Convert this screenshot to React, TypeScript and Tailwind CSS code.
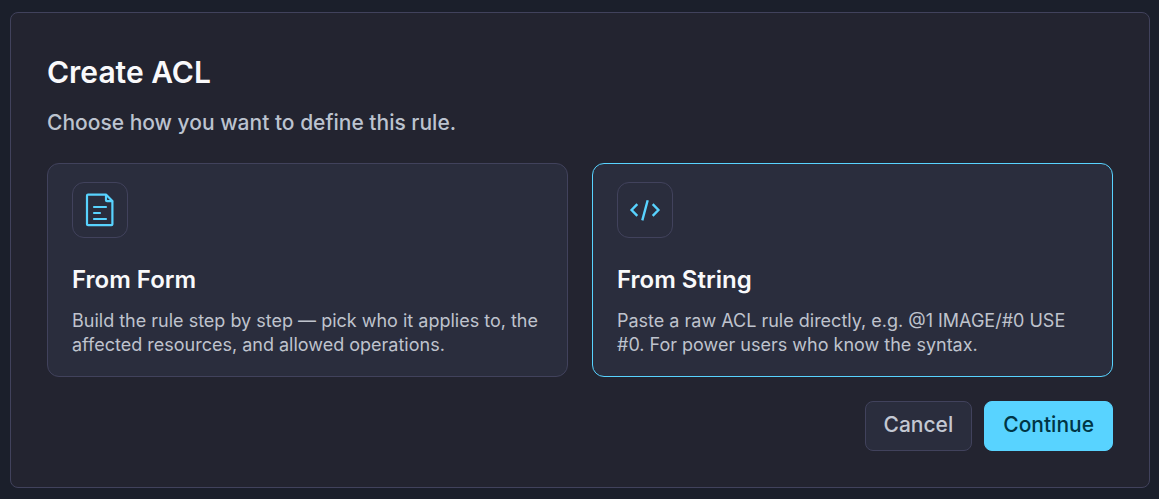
import { useState } from 'react'
import type { ReactNode } from 'react'
import clsx from 'clsx'

type Method = 'form' | 'string'

interface MethodCardProps {
  icon: ReactNode
  title: string
  description: string
  selected: boolean
  onSelect: () => void
}

function FormIcon() {
  return (
    <svg
      className="h-9 w-9"
      viewBox="0 0 36 36"
      fill="none"
      stroke="currentColor"
      strokeWidth="2.2"
      strokeLinecap="round"
      strokeLinejoin="round"
      aria-hidden="true"
    >
      <path d="M6 2.7h18.2l6.2 6.3v23.2a1 1 0 0 1-1 1H6a1 1 0 0 1-1-1V3.7a1 1 0 0 1 1-1z" />
      <path d="M24 3v5.2a1 1 0 0 0 1 1h5.1" />
      <path d="M12 15h12M12 21h6M12 27h12" />
    </svg>
  )
}

function CodeIcon() {
  return (
    <svg
      className="h-9 w-9"
      viewBox="0 0 36 36"
      fill="none"
      stroke="currentColor"
      strokeWidth="2.4"
      strokeLinejoin="miter"
      aria-hidden="true"
    >
      <path d="M10.3 12.2 4.6 18l5.7 5.8M25.7 12.2l5.7 5.8-5.7 5.8M20.7 8.2l-5.4 20.2" />
    </svg>
  )
}

function MethodCard({ icon, title, description, selected, onSelect }: MethodCardProps) {
  return (
    <button
      type="button"
      aria-pressed={selected}
      onClick={onSelect}
      className={clsx(
        'flex flex-col items-start rounded-xl border bg-[#2a2d3d] px-6 pt-[18px] pb-[19px] text-left',
        selected ? 'border-[#58d3ff]' : 'border-[#41425c]'
      )}
    >
      <span className="flex h-14 w-14 items-center justify-center rounded-xl border border-[#41425c] text-[#58d3ff]">
        {icon}
      </span>
      <span className="mt-6 text-2xl leading-9 font-semibold text-[#f9f9fb]">{title}</span>
      <span className="mt-[11px] text-lg leading-6 text-[#bfc3cd]">{description}</span>
    </button>
  )
}

export default function App() {
  const [method, setMethod] = useState<Method>('string')

  return (
    <main className="min-h-screen bg-[#1b1f2b] py-3 pr-[9px] pl-[10px] font-['Inter',sans-serif]">
      <section className="rounded-lg border border-[#41425c] bg-[#232430] p-9">
        <h1 className="text-3xl leading-[46px] font-semibold text-[#f9f9fb]">Create ACL</h1>
        <p className="mt-3 text-[21px] leading-8 font-medium text-[#bcc3cf]">
          Choose how you want to define this rule.
        </p>

        <div className="mt-6 grid grid-cols-2 gap-6">
          <MethodCard
            icon={<FormIcon />}
            title="From Form"
            description="Build the rule step by step — pick who it applies to, the affected resources, and allowed operations."
            selected={method === 'form'}
            onSelect={() => setMethod('form')}
          />
          <MethodCard
            icon={<CodeIcon />}
            title="From String"
            description="Paste a raw ACL rule directly, e.g. @1 IMAGE/#0 USE #0. For power users who know the syntax."
            selected={method === 'string'}
            onSelect={() => setMethod('string')}
          />
        </div>

        <div className="mt-6 flex justify-end gap-3 text-[21px] leading-8 font-medium">
          <button
            type="button"
            className="rounded-lg border border-[#41425c] bg-[#2a2d3d] px-[18px] pt-[7px] pb-[9px] text-[#c3c8d2]"
          >
            Cancel
          </button>
          <button
            type="button"
            className="rounded-lg border border-[#58d3ff] bg-[#58d3ff] px-[18px] pt-[7px] pb-[9px] text-[#003544]"
          >
            Continue
          </button>
        </div>
      </section>
    </main>
  )
}
